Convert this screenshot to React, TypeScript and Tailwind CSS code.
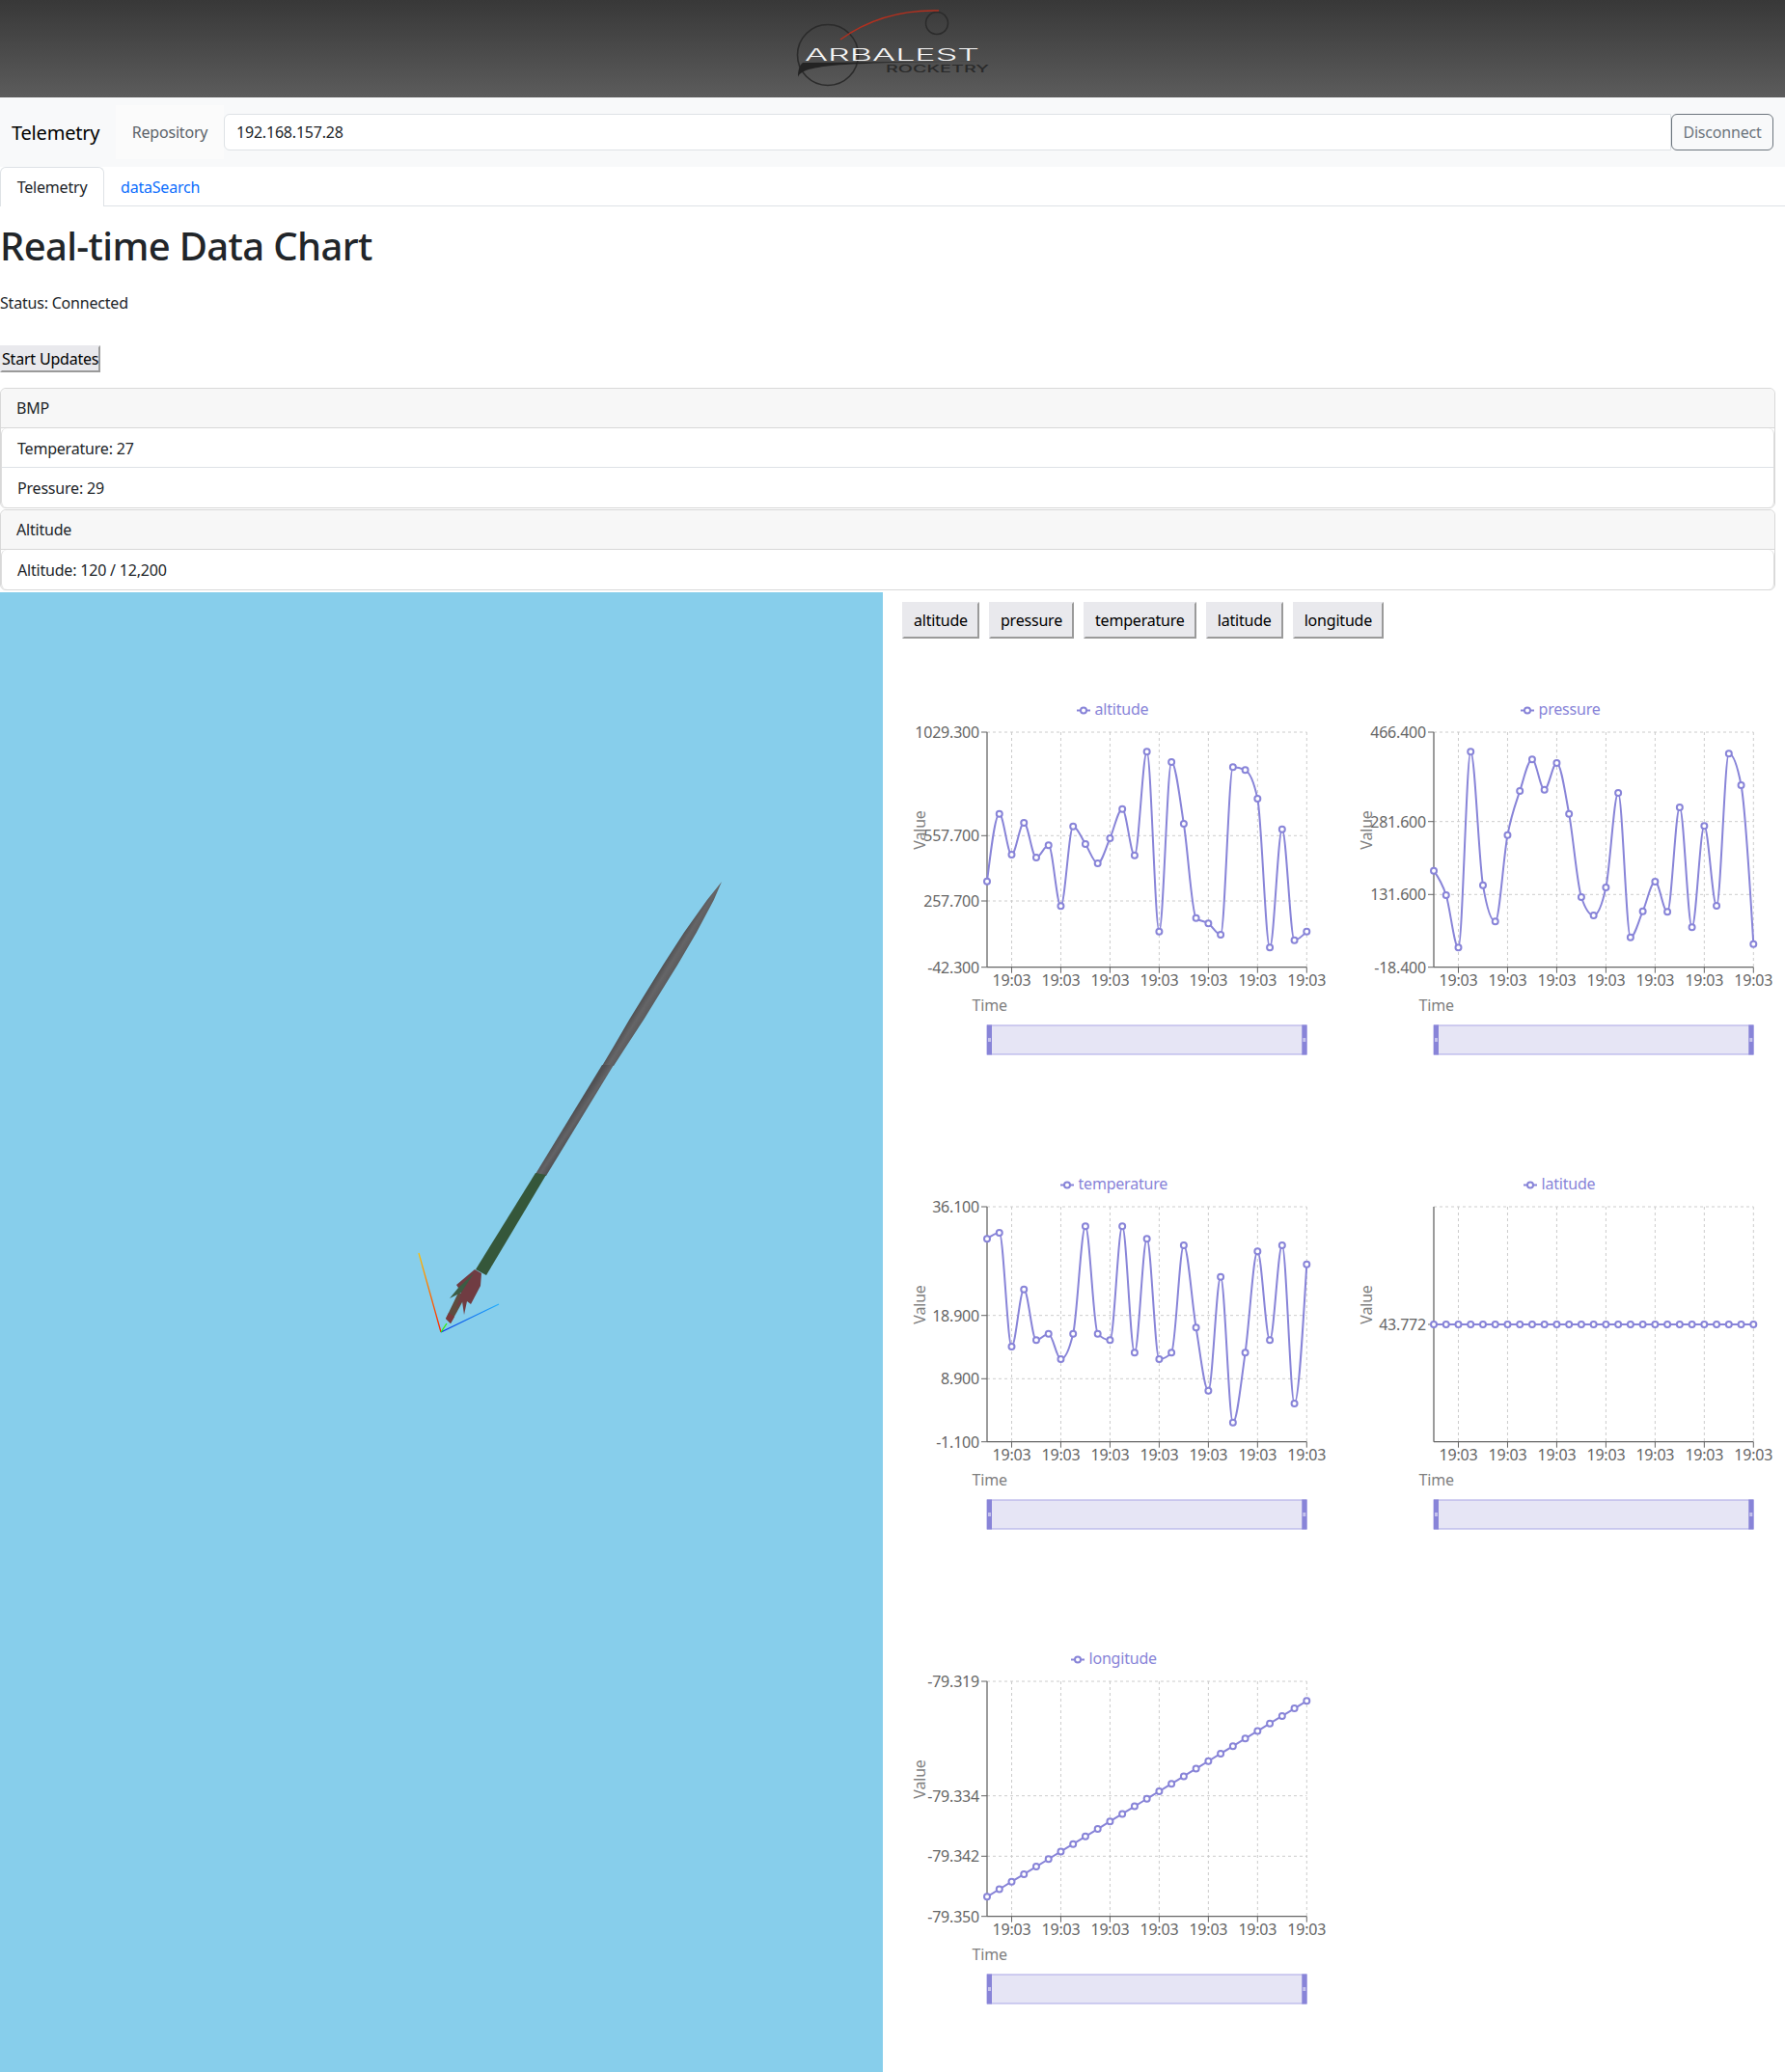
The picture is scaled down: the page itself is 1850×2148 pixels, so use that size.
import React from 'react';

type ChartDef = {
  name: string;
  legendX: number;
  ticks: { y: number; label: string }[];
  points: number[];
  grid: boolean;
};

const AX_LEFT = 98;
const AX_RIGHT = 429.3;
const AX_TOP = 59;
const AX_BOTTOM = 302.7;
const PURPLE = '#8884d8';

const altitudeRaw = [911, 701, 828, 729, 837, 799, 988, 740, 795, 855, 777, 686, 830, 508, 1067, 540, 732, 1025, 1042, 1077, 556, 565, 654, 1117, 749, 1094, 1067];
const pressureRaw = [578, 654, 817, 208, 623, 736, 467, 330, 232, 326, 243, 401, 660, 717, 630, 336, 785, 704, 612, 706, 381, 754, 439, 687, 214, 312, 806];
const temperatureRaw = [253, 234, 588, 410, 568, 548, 627, 548, 214, 548, 568, 214, 607, 253, 627, 607, 273, 529, 725, 371, 824, 607, 292, 568, 273, 765, 332];

const charts: ChartDef[] = [
  {
    name: 'altitude',
    legendX: 191,
    grid: true,
    ticks: [
      { y: 59, label: '1029.300' },
      { y: 166.3, label: '557.700' },
      { y: 234, label: '257.700' },
      { y: 302.7, label: '-42.300' },
    ],
    points: altitudeRaw.map(v => v / 3 - 90),
  },
  {
    name: 'pressure',
    legendX: 188,
    grid: true,
    ticks: [
      { y: 59, label: '466.400' },
      { y: 151.7, label: '281.600' },
      { y: 227.3, label: '131.600' },
      { y: 302.7, label: '-18.400' },
    ],
    points: pressureRaw.map(v => v / 3 + 10),
  },
  {
    name: 'temperature',
    legendX: 174,
    grid: true,
    ticks: [
      { y: 59, label: '36.100' },
      { y: 171.7, label: '18.900' },
      { y: 237.3, label: '8.900' },
      { y: 302.7, label: '-1.100' },
    ],
    points: temperatureRaw.map(v => v / 3 + 8),
  },
  {
    name: 'latitude',
    legendX: 191,
    grid: false,
    ticks: [{ y: 181, label: '43.772' }],
    points: Array.from({ length: 27 }, () => 181),
  },
  {
    name: 'longitude',
    legendX: 185,
    grid: true,
    ticks: [
      { y: 59, label: '-79.319' },
      { y: 177.7, label: '-79.334' },
      { y: 240.3, label: '-79.342' },
      { y: 302.7, label: '-79.350' },
    ],
    points: Array.from({ length: 27 }, (_, i) => 282.3 - (i * 203) / 26),
  },
];

const xAt = (i: number) => AX_LEFT + (i * (AX_RIGHT - AX_LEFT)) / 26;

// same curve as d3 curveMonotoneX
function monotonePath(ys: number[]) {
  const h = xAt(1) - xAt(0);
  const n = ys.length;
  const t: number[] = new Array(n).fill(0);
  for (let i = 1; i < n - 1; i++) {
    const s0 = (ys[i] - ys[i - 1]) / h;
    const s1 = (ys[i + 1] - ys[i]) / h;
    const p = (s0 + s1) / 2;
    t[i] = (Math.sign(s0) + Math.sign(s1)) * Math.min(Math.abs(s0), Math.abs(s1), 0.5 * Math.abs(p)) || 0;
  }
  t[0] = (3 * (ys[1] - ys[0]) / h - t[1]) / 2;
  t[n - 1] = (3 * (ys[n - 1] - ys[n - 2]) / h - t[n - 2]) / 2;
  let d = `M${xAt(0)},${ys[0]}`;
  for (let i = 1; i < n; i++) {
    const dx = h / 3;
    d += `C${xAt(i - 1) + dx},${ys[i - 1] + dx * t[i - 1]} ${xAt(i) - dx},${ys[i] - dx * t[i]} ${xAt(i)},${ys[i]}`;
  }
  return d;
}

const Chart: React.FC<{ chart: ChartDef }> = ({ chart }) => {
  const xTicks = [2, 6, 10, 14, 18, 22, 26];
  return (
    <svg width={463} height={400} className="block">
      {/* legend */}
      <line x1={chart.legendX} x2={chart.legendX + 14} y1={36.5} y2={36.5} stroke={PURPLE} strokeWidth={2} />
      <circle cx={chart.legendX + 7} cy={36.5} r={3} fill="#fff" stroke={PURPLE} strokeWidth={2} />
      <text x={chart.legendX + 18.5} y={40.5} fontSize={16} fill={PURPLE}>{chart.name}</text>

      {/* grid */}
      <line x1={AX_LEFT} x2={AX_RIGHT} y1={AX_TOP} y2={AX_TOP} stroke="#ccc" strokeDasharray="3 3" />
      {chart.grid && chart.ticks.slice(1, 3).map(tk => (
        <line key={tk.y} x1={AX_LEFT} x2={AX_RIGHT} y1={tk.y} y2={tk.y} stroke="#ccc" strokeDasharray="3 3" />
      ))}
      {xTicks.map(i => (
        <line key={i} x1={xAt(i)} x2={xAt(i)} y1={AX_TOP} y2={AX_BOTTOM} stroke="#ccc" strokeDasharray="3 3" />
      ))}

      {/* axes */}
      <line x1={AX_LEFT} x2={AX_LEFT} y1={AX_TOP} y2={AX_BOTTOM} stroke="#666" strokeWidth={1.3} />
      <line x1={AX_LEFT} x2={AX_RIGHT} y1={AX_BOTTOM} y2={AX_BOTTOM} stroke="#666" strokeWidth={1.3} />
      {chart.ticks.map(tk => (
        <g key={tk.label}>
          <line x1={AX_LEFT - 6} x2={AX_LEFT} y1={tk.y} y2={tk.y} stroke="#666" />
          <text x={AX_LEFT - 8} y={tk.y + 6} textAnchor="end" fontSize={16} fill="#666">{tk.label}</text>
        </g>
      ))}
      {xTicks.map(i => (
        <g key={i}>
          <line x1={xAt(i)} x2={xAt(i)} y1={AX_BOTTOM} y2={AX_BOTTOM + 6} stroke="#666" />
          <text x={xAt(i)} y={321.5} textAnchor="middle" fontSize={16} fill="#666">19:03</text>
        </g>
      ))}
      <text x={100.7} y={347.5} textAnchor="middle" fontSize={16} fill="#808080">Time</text>
      <text transform="translate(34 160.5) rotate(-90)" textAnchor="middle" fontSize={16} fill="#808080">Value</text>

      {/* series */}
      <path d={monotonePath(chart.points)} fill="none" stroke={PURPLE} strokeWidth={2} />
      {chart.points.map((y, i) => (
        <circle key={i} cx={xAt(i)} cy={y} r={3} fill="#fff" stroke={PURPLE} strokeWidth={2} />
      ))}

      {/* brush */}
      <rect x={AX_LEFT} y={363} width={AX_RIGHT - AX_LEFT} height={30} fill="#e6e5f5" stroke="#a9a6e6" />
      <rect x={AX_LEFT} y={362.5} width={5} height={31} fill={PURPLE} />
      <rect x={AX_RIGHT - 5} y={362.5} width={5} height={31} fill={PURPLE} />
      <line x1={AX_LEFT + 1} x2={AX_LEFT + 4} y1={377} y2={377} stroke="#fff" />
      <line x1={AX_LEFT + 1} x2={AX_LEFT + 4} y1={379} y2={379} stroke="#fff" />
      <line x1={AX_RIGHT - 4} x2={AX_RIGHT - 1} y1={377} y2={377} stroke="#fff" />
      <line x1={AX_RIGHT - 4} x2={AX_RIGHT - 1} y1={379} y2={379} stroke="#fff" />
    </svg>
  );
};

const Logo = () => (
  <svg width={280} height={101} viewBox="785 0 280 101" className="block">
    <circle cx={858} cy={57} r={31.5} fill="none" stroke="#2b2b2b" strokeWidth={1.6} />
    <circle cx={971} cy={24} r={11.5} fill="none" stroke="#2b2b2b" strokeWidth={1.5} />
    <path d="M871 41C900 20 935 10 973 11" fill="none" stroke="#b3301f" strokeWidth={1.4} />
    <path d="M827 80C832 68 860 65 1018 63.5L832 65C828 68 827 74 827 80Z" fill="#232323" />
    <text x={834} y={62.5} fontSize={17.5} fontWeight={300} letterSpacing={0} fill="#f5f5f5" fontFamily="Inter, sans-serif" textLength={181} lengthAdjust="spacingAndGlyphs">ARBALEST</text>
    <text x={918} y={75} fontSize={10} fontWeight={500} letterSpacing={0} fill="#2a2a2a" fontFamily="Inter, sans-serif" textLength={107} lengthAdjust="spacingAndGlyphs">ROCKETRY</text>
  </svg>
);

const Rocket = () => (
  <svg width={915} height={1534} viewBox="0 614 915 1534" className="block">
    <defs>
      <linearGradient id="noseShade" gradientUnits="userSpaceOnUse" x1="645" y1="1066" x2="658" y2="1074">
        <stop offset="0" stopColor="#4c4c4e" />
        <stop offset="0.5" stopColor="#656567" />
        <stop offset="1" stopColor="#5a5a5c" />
      </linearGradient>
      <linearGradient id="bodyShade" gradientUnits="userSpaceOnUse" x1="584" y1="1166" x2="596" y2="1174">
        <stop offset="0.1" stopColor="#505053" />
        <stop offset="0.55" stopColor="#636366" />
        <stop offset="0.9" stopColor="#545457" />
      </linearGradient>
      <linearGradient id="xAxis" gradientUnits="userSpaceOnUse" x1="457" y1="1381" x2="434" y2="1299">
        <stop offset="0" stopColor="#ff2000" />
        <stop offset="1" stopColor="#ffc000" />
      </linearGradient>
      <linearGradient id="zAxis" gradientUnits="userSpaceOnUse" x1="457" y1="1381" x2="517" y2="1352">
        <stop offset="0" stopColor="#0030e0" />
        <stop offset="1" stopColor="#20b0ff" />
      </linearGradient>
    </defs>
    <polygon points="748,914 739.8,933 721.7,967 702.4,1000 683.8,1030 667.2,1057 648.9,1085 636,1105 624,1105 635.9,1085 652.2,1057 668.8,1030 687.4,1000 708.7,967 732.8,933" fill="url(#noseShade)" />
    <polygon points="636,1104 624,1104 555,1217 566,1219" fill="url(#bodyShade)" />
    <polygon points="566,1218 555,1216 493,1316 504,1322" fill="#35573a" />
    {/* tail */}
    <polygon points="475,1340 462,1367 467,1372 478,1352 483,1342" fill="#5f4c3f" />
    <polygon points="462,1367 467,1372 471,1365 465,1361" fill="#7a3a3c" />
    {/* fins */}
    <polygon points="492,1316 499,1320 498,1333 488,1352 484,1349 481,1363 479,1349 473,1356 478,1340 475,1335 473,1332" fill="#703c42" />
    <polygon points="466,1346 475,1335 491,1320 478,1340" fill="#3c5c44" />
    <line x1="457" y1="1381" x2="434" y2="1299" stroke="url(#xAxis)" strokeWidth={1.3} />
    <line x1="457" y1="1381" x2="517" y2="1352" stroke="url(#zAxis)" strokeWidth={1.3} />
    <line x1="457" y1="1381" x2="463" y2="1372" stroke="#30f000" strokeWidth={1.3} />
  </svg>
);

const InfoCard: React.FC<{ title: string; rows: string[]; className?: string }> = ({ title, rows, className }) => (
  <div className={`border border-[#d8d8d8] rounded-md ${className ?? ''}`}>
    <div className="h-[41px] px-4 flex items-center bg-[#f7f7f7] border-b border-[#d8d8d8] rounded-t-md">{title}</div>
    <div className="border-x border-[#dddddd] rounded-md bg-white">
      {rows.map((row, i) => (
        <div key={row} className={`h-[41px] px-4 flex items-center ${i < rows.length - 1 ? 'border-b border-[#dee2e6] pt-px' : ''}`}>{row}</div>
      ))}
    </div>
  </div>
);

const plainButton = 'border-2 border-t-[#e9e9ed] border-l-[#e9e9ed] border-r-[#9a9a9a] border-b-[#9a9a9a] bg-[#e9e9ed] text-black';

export default function App() {
  return (
    <div className="font-['Noto_Sans',sans-serif] text-[16px] tracking-[-0.0125em] text-[#212529] bg-white w-[1850px] h-[2148px] overflow-hidden">
      <header className="h-[101px] flex justify-center bg-gradient-to-b from-[#383838] to-[#5c5c5c]">
        <Logo />
      </header>

      <nav className="h-[72px] bg-[#f8f9fa] flex items-center pl-3 pr-3 py-2">
        <span className="text-[20px] text-black mr-4 w-[92px] pt-[2px] whitespace-nowrap">Telemetry</span>
        <div className="flex-1 flex items-center self-stretch">
          <span className="self-stretch w-[112px] flex items-center justify-center bg-[#fbfbfb] text-[#5c636a]">Repository</span>
          <div className="flex-1 h-[38px] flex items-center px-3 bg-white border border-[#dee2e6] rounded-l-md">192.168.157.28</div>
          <button className="w-[106px] h-[38px] border border-[#6c757d] rounded-md text-[#6c757d]">Disconnect</button>
        </div>
      </nav>

      <div className="h-[41px] flex border-b border-[#dee2e6]">
        <div className="w-[108px] h-[41px] flex items-center justify-center border border-b-0 border-[#dee2e6] rounded-t-md bg-white">Telemetry</div>
        <div className="pl-[17px] pr-4 pt-px flex items-center text-[#0d6efd]">dataSearch</div>
      </div>

      <h1 className="mt-[17px] h-[48px] text-[40px] leading-[48px] tracking-[-0.016em] font-medium">Real-time Data Chart</h1>
      <p className="mt-[23px] leading-6">Status: Connected</p>
      <button className={`mt-[32px] h-[28px] w-[104px] block px-0 whitespace-nowrap ${plainButton}`}>Start Updates</button>

      <div className="mt-4 mr-[10px]">
        <InfoCard title="BMP" rows={['Temperature: 27', 'Pressure: 29']} />
        <InfoCard title="Altitude" rows={['Altitude: 120 / 12,200']} className="mt-px" />
      </div>

      <div className="mt-[2px] flex">
        <div className="w-[915px] h-[1534px] bg-[#87ceeb]">
          <Rocket />
        </div>
        <div className="flex-1">
          <div className="pt-[10px] pl-[20px] flex gap-[10px]">
            {['altitude', 'pressure', 'temperature', 'latitude', 'longitude'].map(name => (
              <button key={name} className={`h-[38px] px-[10px] ${plainButton}`}>{name}</button>
            ))}
          </div>
          <div className="mt-[38px] pl-[10px] grid grid-cols-[463px_463px] gap-y-[92px]">
            {charts.map(chart => (
              <Chart key={chart.name} chart={chart} />
            ))}
          </div>
        </div>
      </div>
    </div>
  );
}
